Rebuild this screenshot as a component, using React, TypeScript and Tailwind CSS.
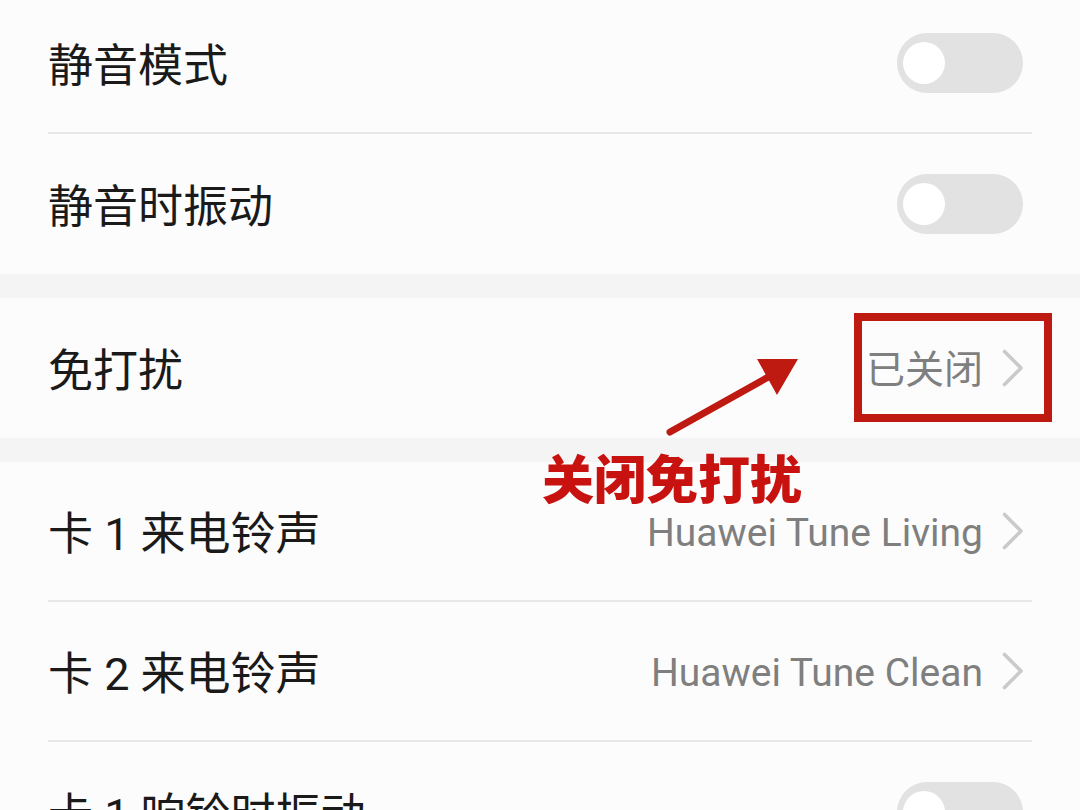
import React from "react";

const font = { fontFamily: "Roboto, 'Noto Sans CJK SC', sans-serif" };

function Toggle() {
  return (
    <div className="flex h-[60px] w-[126px] items-center rounded-full bg-[#e2e2e2] pl-[6px]">
      <div className="h-[42px] w-[42px] rounded-full bg-white" />
    </div>
  );
}

function Chevron() {
  return (
    <svg width="22" height="38" viewBox="0 0 22 38" fill="none">
      <polyline
        points="2.5,2.5 19,19 2.5,35.5"
        stroke="#cacaca"
        strokeWidth="3.6"
        strokeLinecap="round"
        strokeLinejoin="round"
      />
    </svg>
  );
}

interface RowProps {
  label: string;
  value?: string;
  toggle?: boolean;
  divider?: boolean;
}

function Row({ label, value, toggle, divider }: RowProps) {
  return (
    <div className="h-[140px] shrink-0 bg-[#fcfcfc] px-[48px]">
      <div
        className={`flex h-full items-center justify-between ${
          divider ? "border-b-2 border-[#e7e7e7]" : ""
        }`}
      >
        <span className="mt-[6px] text-[45px] leading-none text-[#1a1a1a]">{label}</span>
        {toggle && (
          <div className="mr-[9px]">
            <Toggle />
          </div>
        )}
        {value !== undefined && (
          <div className="mr-[8px] flex items-center gap-[19px]">
            <span className="mt-[5px] text-[39px] leading-none text-[#7f7f7f]">{value}</span>
            <Chevron />
          </div>
        )}
      </div>
    </div>
  );
}

export default function App() {
  return (
    <div className="relative h-[810px] w-[1080px] overflow-hidden bg-[#f4f4f4]" style={font}>
      <div className="-mt-[6px] flex flex-col">
        <Row label="静音模式" toggle divider />
        <Row label="静音时振动" toggle />
        <div className="h-[24px] shrink-0 bg-[#f4f4f4]" />
        <Row label="免打扰" value="已关闭" />
        <div className="h-[24px] shrink-0 bg-[#f4f4f4]" />
        <Row label="卡 1 来电铃声" value="Huawei Tune Living" divider />
        <Row label="卡 2 来电铃声" value="Huawei Tune Clean" divider />
        <Row label="卡 1 响铃时振动" toggle />
      </div>

      {/* annotation */}
      <div className="absolute left-[854px] top-[313px] h-[109px] w-[198px] border-[8px] border-[#bf1a12]" />
      <svg
        className="absolute left-[660px] top-[350px]"
        width="145"
        height="90"
        viewBox="0 0 145 90"
      >
        <line
          x1="10"
          y1="82"
          x2="112"
          y2="25"
          stroke="#bf1a12"
          strokeWidth="7"
          strokeLinecap="round"
        />
        <polygon points="138,9 97,9 117,45" fill="#bf1a12" />
      </svg>
      <div className="absolute left-[542px] top-[453px] text-[52px] font-black leading-[58px] text-[#c8120f]">
        关闭免打扰
      </div>
    </div>
  );
}
